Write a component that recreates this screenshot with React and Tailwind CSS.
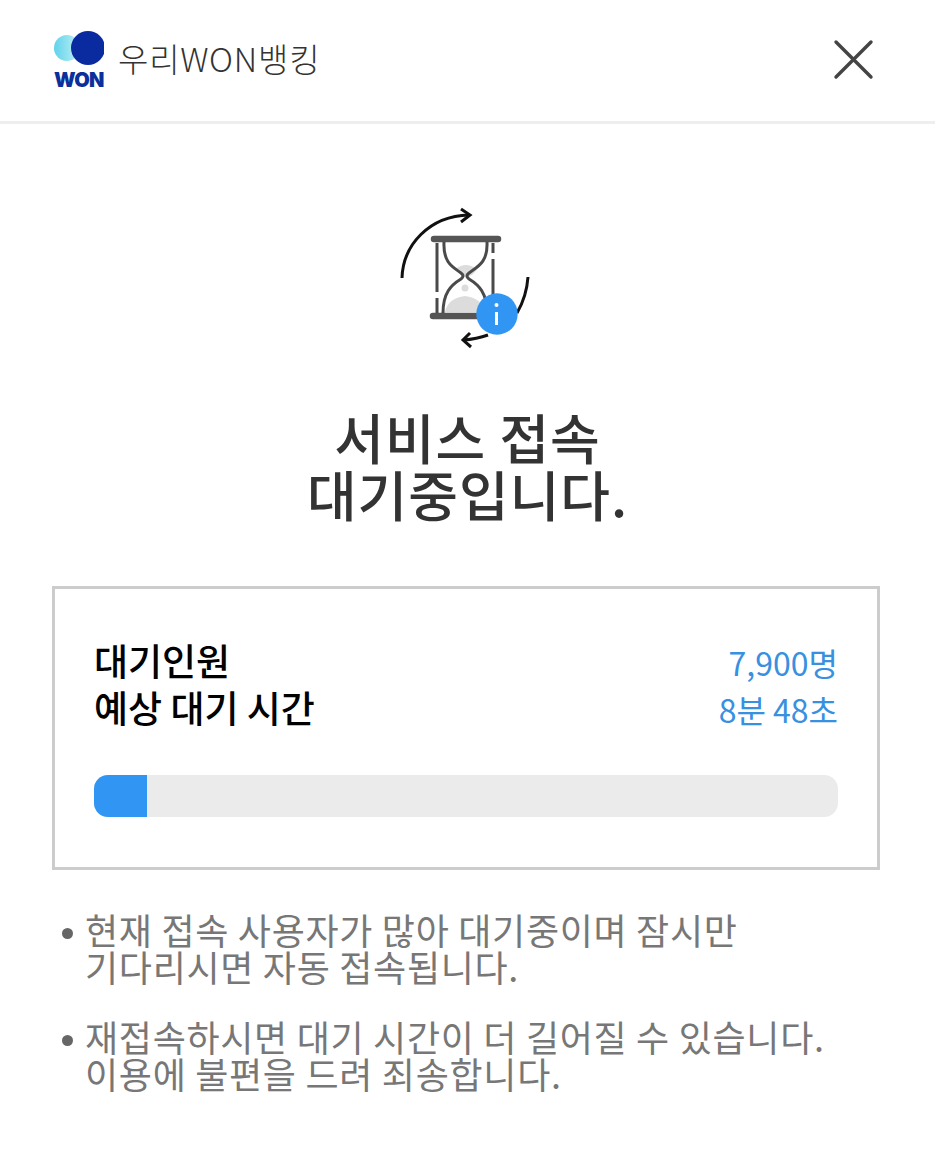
const WonLogo = () => (
    <div className="flex flex-col items-center w-[50px]">
        <svg width="50" height="36" viewBox="0 0 50 36">
            <defs>
                <linearGradient id="wonGrad" x1="0" y1="0" x2="1" y2="0">
                    <stop offset="0" stopColor="#5fd3ea" />
                    <stop offset="1" stopColor="#c4f0f6" />
                </linearGradient>
            </defs>
            <circle cx="13" cy="17" r="13" fill="url(#wonGrad)" />
            <circle cx="34" cy="17" r="17" fill="#0a2aa0" />
        </svg>
        <span className="mt-[3px] text-[20px] leading-[20px] font-black text-[#0b309c] tracking-[-0.6px] font-['Inter',sans-serif]">WON</span>
    </div>
);

const HourglassIcon = () => (
    <svg width="160" height="160" viewBox="0 0 160 160" fill="none">
        {/* sand */}
        <path d="M71 74 Q80 66 92 74 Q90 79 81 83 Q73 79 71 74Z" fill="#dcdcdc" />
        <circle cx="80" cy="93" r="3.5" fill="#dcdcdc" />
        <path d="M60 117 Q63 103 80 101 Q97 103 100 117Z" fill="#dcdcdc" />
        {/* frame */}
        <path d="M49 44H113" stroke="#555" strokeWidth="6.5" strokeLinecap="round" />
        <path d="M48 121H113" stroke="#555" strokeWidth="6.5" strokeLinecap="round" />
        <path d="M52 48V97M52 103V118" stroke="#4a4a4a" strokeWidth="3" />
        <path d="M108 48V58M108 64V102" stroke="#4a4a4a" strokeWidth="3" />
        <path d="M59 47C58 68 68 72 76 78Q80 81 76 84C66 90 58 98 58 118" stroke="#4a4a4a" strokeWidth="3" />
        <path d="M102 47C103 68 92 72 84 78Q80 81 84 84C94 90 102 98 102 118" stroke="#4a4a4a" strokeWidth="3" />
        {/* arrows */}
        <path d="M17 83C18 50 44 21 84 20" stroke="#111" strokeWidth="3" />
        <path d="M76 14L85 20L76 27" stroke="#111" strokeWidth="3" />
        <path d="M143 82C142 96 139 106 132 118" stroke="#111" strokeWidth="3" />
        <path d="M103 140Q92 144 78 145" stroke="#111" strokeWidth="3" />
        <path d="M85 138L78 145L86 152" stroke="#111" strokeWidth="3" />
        {/* info badge */}
        <circle cx="112" cy="119" r="20.7" fill="#3196f3" />
        <circle cx="111.5" cy="110" r="2" fill="#fff" />
        <path d="M111.5 117V130" stroke="#fff" strokeWidth="3" />
    </svg>
);

const Bullet = ({ lines }) => (
    <div className="flex">
        <div className="w-[33px] shrink-0 pl-[10px] pt-[17px]">
            <div className="w-[11px] h-[11px] rounded-full bg-[#666]"></div>
        </div>
        <p className="text-[36px] leading-[37px] font-normal text-[#777777] tracking-[0.7px]">
            {lines.map((line, i) => (
                <span key={i} className="block whitespace-nowrap">{line}</span>
            ))}
        </p>
    </div>
);

export default function App() {
    return (
        <div className="w-[935px] h-[1152px] bg-white overflow-hidden font-['Noto_Sans_CJK_KR','Noto_Sans',sans-serif]">
            <header className="h-[124px] border-b-[3px] border-[#eeeeee] flex items-start justify-between pl-[54px] pr-[58px]">
                <div className="flex items-start pt-[31px]">
                    <WonLogo />
                    <span className="ml-[14px] mt-[3px] text-[33px] leading-[48px] font-light text-[#333] tracking-[0.8px]">우리WON뱅킹</span>
                </div>
                <svg className="mt-[38px]" width="44" height="44" viewBox="0 0 44 44" fill="none">
                    <path d="M3 4L38 39M38 4L3 39" stroke="#444" strokeWidth="3.4" strokeLinecap="round" />
                </svg>
            </header>

            <div className="flex pl-[385px] mt-[71px]">
                <HourglassIcon />
            </div>

            <h1 className="mt-[53px] text-center text-[54px] leading-[57px] font-medium text-[#333] tracking-[1px]">
                서비스 접속<br />대기중입니다.
            </h1>

            <section className="mt-[64px] ml-[52px] mr-[55px] h-[284px] border-[3px] border-[#cccccc] px-[39px] pt-[48px]">
                <div className="flex justify-between">
                    <div className="text-[37px] leading-[47px] font-medium text-black">
                        <div>대기인원</div>
                        <div>예상 대기 시간</div>
                    </div>
                    <div className="pt-[2px] text-[32px] leading-[47px] font-normal text-[#3790e0] text-right">
                        <div>7,900명</div>
                        <div>8분 48초</div>
                    </div>
                </div>
                <div className="mt-[42px] h-[42px] rounded-[14px] bg-[#ebebeb] overflow-hidden">
                    <div className="h-full w-[53px] bg-[#3196f3]"></div>
                </div>
            </section>

            <div className="mt-[41px] ml-[52px] flex flex-col gap-[33px]">
                <Bullet lines={['현재 접속 사용자가 많아 대기중이며 잠시만', '기다리시면 자동 접속됩니다.']} />
                <Bullet lines={['재접속하시면 대기 시간이 더 길어질 수 있습니다.', '이용에 불편을 드려 죄송합니다.']} />
            </div>
        </div>
    );
}
